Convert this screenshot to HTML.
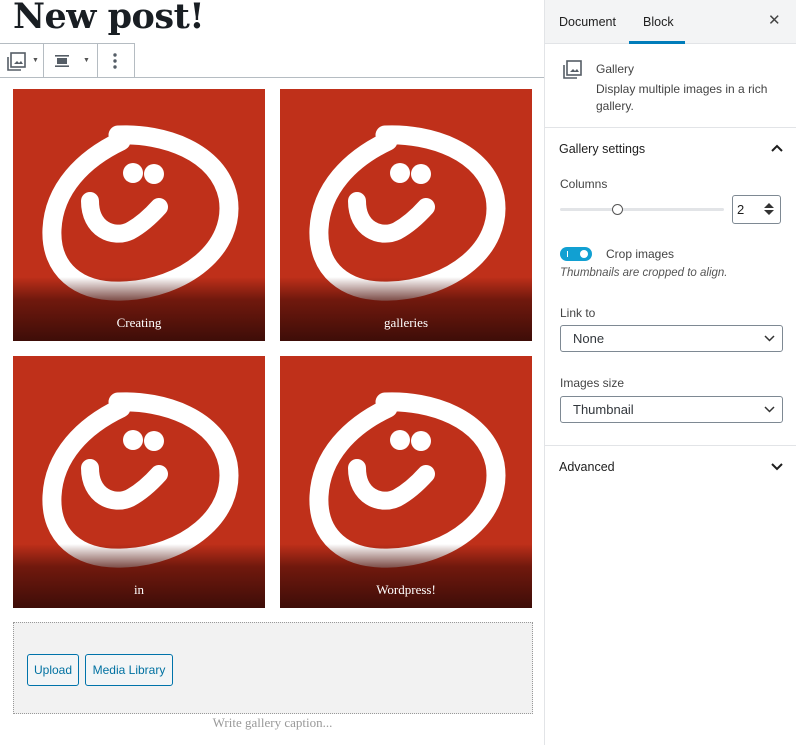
<!DOCTYPE html>
<html><head><style>
*{box-sizing:border-box;margin:0;padding:0}
body{width:796px;height:745px;overflow:hidden;background:#fff;font-family:"Liberation Sans","DejaVu Sans",sans-serif;position:relative;color:#1e1e1e}
.abs{position:absolute}
h1{position:absolute;left:13px;top:-4px;font-family:"DejaVu Serif","Liberation Serif",serif;font-size:35px;font-weight:bold;color:#191e23;letter-spacing:-0.5px}
.tb{position:absolute;left:0;top:43px;width:135px;height:35px;border:1px solid #b5bcc2;border-left:none;background:#fff}
.tbline{position:absolute;left:0;top:77px;width:544px;height:1px;background:#b5bcc2}
.tile{position:absolute;width:252px;height:252px;background:#bf301a;overflow:hidden}
.tile .g{position:absolute;left:0;right:0;bottom:0;height:64px;background:linear-gradient(rgba(40,5,2,0),rgba(80,15,8,0.7) 35%,#3e0d08)}
.tile span{position:absolute;left:0;right:0;bottom:10px;text-align:center;color:#fff;font-family:"Liberation Serif","DejaVu Serif",serif;font-size:13px}
.ph{position:absolute;left:13px;top:622px;width:520px;height:92px;background:#f2f2f2;border:1px dotted #999}
.btn{position:absolute;top:654px;height:32px;border:1px solid #0073aa;border-radius:3px;color:#0071a1;font-size:12px;line-height:30px;text-align:center;background:#f3f5f6}
.side{position:absolute;left:544px;top:0;width:252px;height:745px;border-left:1px solid #e2e4e7;background:#fff}
.hdr{position:absolute;left:0;top:0;width:251px;height:44px;background:#f3f4f5;border-bottom:1px solid #e2e4e7}
.t{position:absolute;font-size:12.5px;color:#1e1e1e}
.sel{position:absolute;left:15px;width:223px;height:27px;border:1px solid #7e8993;border-radius:3px;font-size:13px;padding-left:12px;line-height:25px;color:#32373c}
.sel svg{position:absolute;right:7px;top:9px}
</style></head><body>
<svg width="0" height="0" style="position:absolute"><defs>
<g id="sm">
<path d="M105 46 C 150 44 205 62 215 108 C 224 160 170 200 110 202 C 65 204 37 180 39 140 C 41 100 70 70 108 52" fill="none" stroke="#fff" stroke-width="19" stroke-linecap="round"/>
<circle cx="120" cy="84" r="10" fill="#fff"/><circle cx="141" cy="85" r="10" fill="#fff"/>
<path d="M77 112 C 77 140 100 150 117 142 C 128 136 137 128 146 118" fill="none" stroke="#fff" stroke-width="18" stroke-linecap="round"/>
</g></defs></svg>
<h1>New post!</h1>
<div class="tb">
<div class="abs" style="left:43px;top:0;width:1px;height:34px;background:#b5bcc2"></div>
<div class="abs" style="left:97px;top:0;width:1px;height:34px;background:#b5bcc2"></div>
<svg class="abs" style="left:7px;top:8px" width="20" height="20" viewBox="0 0 20 20"><rect x="4" y="1" width="14" height="14" fill="none" stroke="#555d66" stroke-width="1.6"/><path d="M1 5v13h13" fill="none" stroke="#555d66" stroke-width="1.6"/><path d="M7 12l3-3 2 2 2-2 2 3z" fill="#555d66"/></svg>
<div class="abs" style="left:32px;top:13px;font-size:7px;color:#555">▼</div>
<svg class="abs" style="left:55px;top:11px" width="14" height="12"><rect x="0" y="0" width="14" height="1.6" fill="#555d66"/><rect x="2" y="3" width="10" height="6" fill="#555d66"/><rect x="0" y="10.4" width="14" height="1.6" fill="#555d66"/></svg>
<div class="abs" style="left:83px;top:13px;font-size:7px;color:#555">▼</div>
<svg class="abs" style="left:113px;top:8px" width="4" height="18"><circle cx="2" cy="3" r="1.7" fill="#555d66"/><circle cx="2" cy="9" r="1.7" fill="#555d66"/><circle cx="2" cy="15" r="1.7" fill="#555d66"/></svg>
</div>
<div class="tbline"></div>

<div class="tile" style="left:13px;top:89px"><svg width="252" height="252"><use href="#sm"/></svg><div class="g"></div><span>Creating</span></div>
<div class="tile" style="left:280px;top:89px"><svg width="252" height="252"><use href="#sm"/></svg><div class="g"></div><span>galleries</span></div>
<div class="tile" style="left:13px;top:356px"><svg width="252" height="252"><use href="#sm"/></svg><div class="g"></div><span>in</span></div>
<div class="tile" style="left:280px;top:356px"><svg width="252" height="252"><use href="#sm"/></svg><div class="g"></div><span>Wordpress!</span></div>

<div class="ph"></div>
<div class="btn" style="left:27px;width:52px">Upload</div>
<div class="btn" style="left:85px;width:88px">Media Library</div>
<div class="abs" style="left:0;width:545px;top:715px;text-align:center;font-family:'Liberation Serif','DejaVu Serif',serif;font-size:13px;color:#999">Write gallery caption...</div>

<div class="side">
<div class="hdr">
<div class="t" style="left:14px;top:15px">Document</div>
<div class="t" style="left:98px;top:15px">Block</div>
<div class="abs" style="left:84px;top:41px;width:56px;height:3px;background:#007cba"></div>
<div class="abs" style="left:223px;top:11px;font-size:15px;font-weight:bold;color:#444">✕</div>
</div>
<svg class="abs" style="left:18px;top:60px" width="20" height="20" viewBox="0 0 20 20"><rect x="4" y="1" width="14" height="14" fill="none" stroke="#555d66" stroke-width="1.6"/><path d="M1 5v13h13" fill="none" stroke="#555d66" stroke-width="1.6"/><path d="M7 12l3-3 2 2 2-2 2 3z" fill="#555d66"/></svg>
<div class="t" style="left:51px;top:62px;font-size:12px;color:#444">Gallery</div>
<div class="t" style="left:51px;top:81px;font-size:12px;color:#444;width:185px;line-height:17px">Display multiple images in a rich gallery.</div>
<div class="abs" style="left:0;top:127px;width:251px;height:1px;background:#e2e4e7"></div>
<div class="t" style="left:14px;top:142px;font-size:12.5px">Gallery settings</div>
<svg class="abs" style="left:226px;top:144px" width="12" height="8"><path d="M1 7l5-5 5 5" fill="none" stroke="#1e1e1e" stroke-width="2"/></svg>
<div class="t" style="left:15px;top:177px;font-size:12px;color:#444">Columns</div>
<div class="abs" style="left:15px;top:208px;width:164px;height:3px;background:#e2e4e7;border-radius:2px"></div>
<div class="abs" style="left:67px;top:204px;width:11px;height:11px;border:1px solid #555;border-radius:50%;background:#fff"></div>
<div class="abs" style="left:187px;top:195px;width:49px;height:29px;border:1px solid #7e8993;border-radius:3px;font-size:13px;padding:6px 0 0 4px">2</div>
<svg class="abs" style="left:218px;top:203px" width="12" height="12"><path d="M1 5l5-5 5 5zM1 7l5 5 5-5z" fill="#333"/></svg>
<div class="abs" style="left:15px;top:247px;width:32px;height:14px;background:#11a0d2;border-radius:8px"></div>
<div class="abs" style="left:35px;top:250px;width:8px;height:8px;background:#fff;border-radius:50%"></div>
<div class="abs" style="left:22px;top:251px;width:1px;height:6px;background:#fff"></div>
<div class="t" style="left:61px;top:247px;font-size:12px;color:#444">Crop images</div>
<div class="t" style="left:15px;top:267px;font-size:11.5px;font-style:italic;color:#555">Thumbnails are cropped to align.</div>
<div class="t" style="left:15px;top:306px;font-size:12px;color:#444">Link to</div>
<div class="sel" style="top:325px">None<svg width="11" height="7"><path d="M1 1l4.5 4.5L10 1" fill="none" stroke="#333" stroke-width="1.5"/></svg></div>
<div class="t" style="left:15px;top:376px;font-size:12px;color:#444">Images size</div>
<div class="sel" style="top:396px">Thumbnail<svg width="11" height="7"><path d="M1 1l4.5 4.5L10 1" fill="none" stroke="#333" stroke-width="1.5"/></svg></div>
<div class="abs" style="left:0;top:445px;width:251px;height:1px;background:#e2e4e7"></div>
<div class="t" style="left:14px;top:460px;font-size:12.5px">Advanced</div>
<svg class="abs" style="left:226px;top:463px" width="12" height="8"><path d="M1 1l5 5 5-5" fill="none" stroke="#1e1e1e" stroke-width="2"/></svg>
</div>
</body></html>
